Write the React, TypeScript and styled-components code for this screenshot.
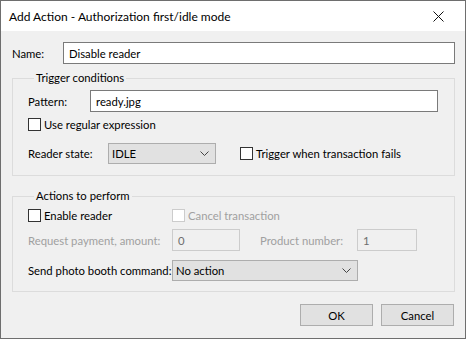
import React from 'react';
import styled, { createGlobalStyle } from 'styled-components';

const GlobalStyle = createGlobalStyle`
  html, body {
    margin: 0;
    padding: 0;
    background: #f0f0f0;
  }
  body {
    font-family: Lato, "Segoe UI", sans-serif;
    font-size: 11.3px;
    line-height: 15px;
    color: #000;
  }
  * {
    box-sizing: border-box;
  }
`;

const Window = styled.div`
  width: 466px;
  height: 339px;
  border: 1px solid #6e6e6e;
  background: #f0f0f0;
  display: flex;
  flex-direction: column;
`;

const TitleBar = styled.div`
  height: 30px;
  background: #fff;
  display: flex;
  align-items: center;
  justify-content: space-between;
  padding: 0 0 0 8px;
  flex-shrink: 0;
`;

const Title = styled.span`
  font-size: 12px;
`;

const CloseButton = styled.div`
  width: 46px;
  height: 30px;
  display: flex;
  align-items: center;
  justify-content: center;
  margin-right: 4px;
`;

const Body = styled.div`
  flex: 1;
  display: flex;
  flex-direction: column;
  padding: 11px 10px 0 11px;
`;

const Row = styled.div<{ $mt?: number }>`
  display: flex;
  align-items: center;
  margin-top: ${p => p.$mt ?? 0}px;
`;

const Label = styled.span<{ $width?: number; $disabled?: boolean }>`
  width: ${p => (p.$width ? `${p.$width}px` : 'auto')};
  flex-shrink: 0;
  white-space: nowrap;
  color: ${p => (p.$disabled ? '#a0a0a0' : '#000')};
`;

const TextBox = styled.div<{ $width?: number; $disabled?: boolean }>`
  height: 22px;
  flex: ${p => (p.$width ? `0 0 ${p.$width}px` : '1')};
  border: 1px solid ${p => (p.$disabled ? '#cccccc' : '#7a7a7a')};
  background: ${p => (p.$disabled ? '#f0f0f0' : '#fff')};
  color: ${p => (p.$disabled ? '#6d6d6d' : '#000')};
  padding: 0 5px;
  display: flex;
  align-items: center;
  white-space: nowrap;
`;

const Select = styled.div<{ $width: number }>`
  width: ${p => p.$width}px;
  height: 21px;
  border: 1px solid #adadad;
  background: #e1e1e1;
  display: flex;
  align-items: center;
  justify-content: space-between;
  padding: 0 6px 0 3px;
  flex-shrink: 0;
`;

const Group = styled.fieldset<{ $mt: number }>`
  margin: ${p => p.$mt}px 0 0 0;
  border: 1px solid #dcdcdc;
  padding: 0 16px 0 15px;
  min-width: 0;
`;

const Legend = styled.legend`
  padding: 0 2px;
  margin-left: 6px;
  line-height: 14px;
`;

const Check = styled.label<{ $disabled?: boolean }>`
  display: flex;
  align-items: center;
  gap: 3px;
  height: 13px;
  white-space: nowrap;
  color: ${p => (p.$disabled ? '#a0a0a0' : '#000')};
`;

const Box = styled.span<{ $disabled?: boolean }>`
  width: 13px;
  height: 13px;
  border: 1px solid ${p => (p.$disabled ? '#cccccc' : '#333333')};
  background: #fff;
  flex-shrink: 0;
`;

const ActionGrid = styled.div<{ $mt: number }>`
  display: grid;
  grid-template-columns: 144px 1fr;
  align-items: center;
  margin-top: ${p => p.$mt}px;
`;

const Spacer = styled.div<{ $size: number }>`
  flex: 0 0 ${p => p.$size}px;
  height: ${p => p.$size}px;
`;

const Footer = styled.div`
  display: flex;
  justify-content: flex-end;
  gap: 8px;
  margin-top: 12px;
  padding-right: 1px;
`;

const Button = styled.div`
  width: 73px;
  height: 22px;
  border: 1px solid #adadad;
  background: #e1e1e1;
  display: flex;
  align-items: center;
  justify-content: center;
`;

const Chevron = () => (
  <svg width="9" height="5" viewBox="0 0 9 5">
    <path d="M0.5 0.5 L4.5 4.5 L8.5 0.5" fill="none" stroke="#444" strokeWidth="1" />
  </svg>
);

const CheckBox: React.FC<{ label: string; disabled?: boolean }> = ({ label, disabled }) => (
  <Check $disabled={disabled}>
    <Box $disabled={disabled} />
    {label}
  </Check>
);

export default function App() {
  return (
    <>
      <GlobalStyle />
      <Window>
        <TitleBar>
          <Title>Add Action - Authorization first/idle mode</Title>
          <CloseButton>
            <svg width="11" height="11" viewBox="0 0 11 11">
              <path d="M0.5 0.5 L10.5 10.5 M10.5 0.5 L0.5 10.5" stroke="#111" strokeWidth="1" />
            </svg>
          </CloseButton>
        </TitleBar>
        <Body>
          <Row>
            <Label $width={51}>Name:</Label>
            <TextBox>Disable reader</TextBox>
          </Row>

          <Group $mt={7}>
            <Legend>Trigger conditions</Legend>
            <Row $mt={5}>
              <Label $width={62}>Pattern:</Label>
              <TextBox>ready.jpg</TextBox>
            </Row>
            <Row $mt={6}>
              <CheckBox label="Use regular expression" />
            </Row>
            <Row $mt={10}>
              <Label $width={80}>Reader state:</Label>
              <Select $width={108}>
                <span>IDLE</span>
                <Chevron />
              </Select>
              <Spacer $size={24} />
              <CheckBox label="Trigger when transaction fails" />
            </Row>
            <Spacer $size={10} />
          </Group>

          <Group $mt={13}>
            <Legend>Actions to perform</Legend>
            <ActionGrid $mt={6}>
              <CheckBox label="Enable reader" />
              <CheckBox label="Cancel transaction" disabled />
            </ActionGrid>
            <ActionGrid $mt={7}>
              <Label $disabled>Request payment, amount:</Label>
              <Row>
                <TextBox $width={68} $disabled>0</TextBox>
                <Spacer $size={20} />
                <Label $width={97} $disabled>Product number:</Label>
                <TextBox $width={60} $disabled>1</TextBox>
              </Row>
            </ActionGrid>
            <ActionGrid $mt={9}>
              <Label>Send photo booth command:</Label>
              <Row>
                <Select $width={186}>
                  <span>No action</span>
                  <Chevron />
                </Select>
              </Row>
            </ActionGrid>
            <Spacer $size={10} />
          </Group>

          <Footer>
            <Button>OK</Button>
            <Button>Cancel</Button>
          </Footer>
        </Body>
      </Window>
    </>
  );
}
